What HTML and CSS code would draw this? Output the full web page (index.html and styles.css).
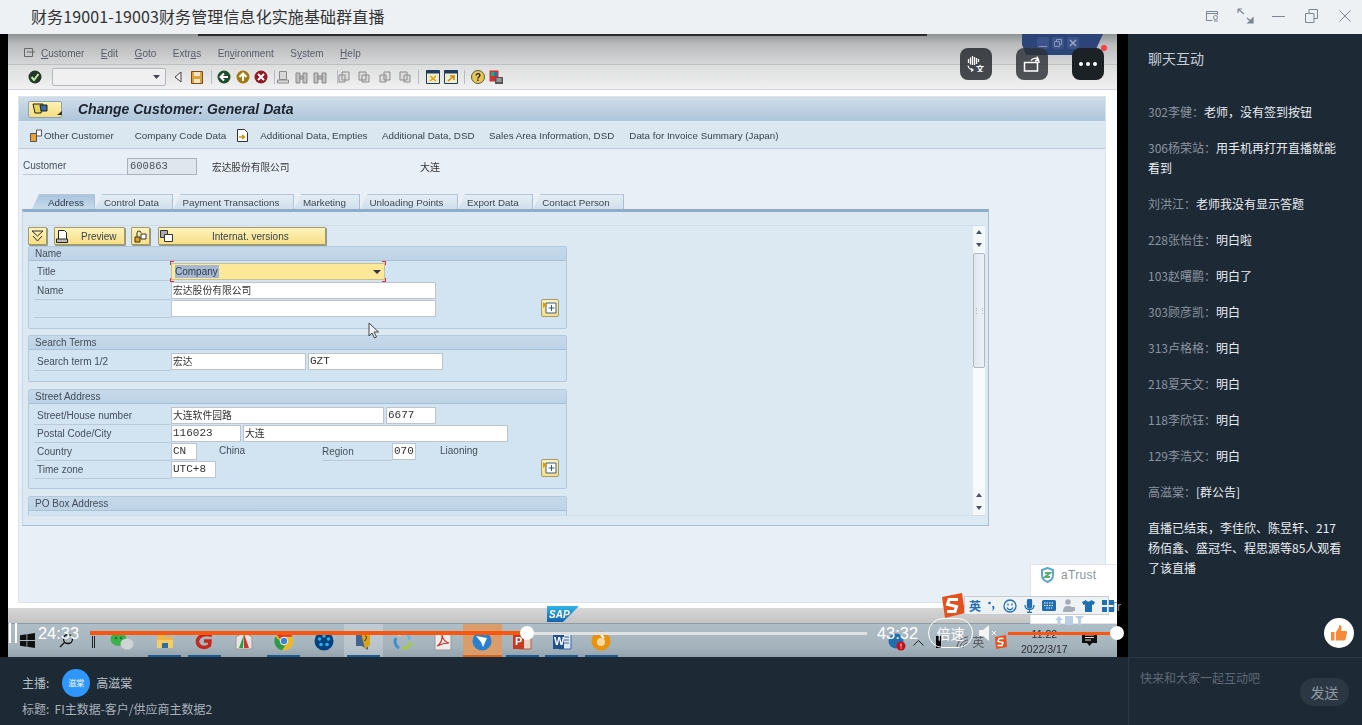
FILE: index.html
```html
<!DOCTYPE html>
<html lang="zh">
<head>
<meta charset="utf-8">
<title>财务19001-19003财务管理信息化实施基础群直播</title>
<link rel="stylesheet" href="styles.css">
</head>
<body>
<div class="app">
  <header class="titlebar">
    <h1 class="title">财务19001-19003财务管理信息化实施基础群直播</h1>
    <div class="winctl">
      <svg class="ic-a" width="14" height="12" viewBox="0 0 14 12" fill="none" stroke="#7d8791"><path d="M12.5 5V1.5H1.5v9h6M1.5 3.5h11"/><circle cx="10.5" cy="7.5" r="2"/><path d="M9 11h4"/></svg>
      <svg class="ic-b" width="17" height="16" viewBox="0 0 17 16" fill="none" stroke="#7d8791" stroke-width="1.2"><path d="M1 1l6 5M1 1v4M1 1h4M16 15l-6-5"/><path d="M16 15v-5l-5 5z" fill="#7d8791"/></svg>
      <svg class="ic-c" width="13" height="12" viewBox="0 0 13 12" stroke="#7d8791"><path d="M0 6.5h13"/></svg>
      <svg class="ic-d" width="13" height="14" viewBox="0 0 13 14" fill="none" stroke="#7d8791"><path d="M.5 4.5h8.500v9H.5zM4 4.500V.5h8.500v9H9"/></svg>
      <svg class="ic-e" width="12" height="12" viewBox="0 0 12 12" stroke="#7d8791"><path d="M.5.5l11 11M11.500.5l-11 11"/></svg>
    </div>
  </header>

  <main class="main">
    <section class="video">
      <div class="sap">
        <div class="sap-menu">
          <svg width="12" height="10" viewBox="0 0 12 10" fill="none" stroke="#666"><path d="M.5.5h8v8h-8zM3 4h8"/></svg>
          <nav class="menu-items"><span><u>C</u>ustomer</span><span><u>E</u>dit</span><span><u>G</u>oto</span><span>Extr<u>a</u>s</span><span>En<u>v</u>ironment</span><span>S<u>y</u>stem</span><span><u>H</u>elp</span></nav>
        </div>
        <div class="sap-tools">
          <svg class="t-check" width="14" height="14" viewBox="0 0 14 14"><circle cx="7" cy="7" r="6.500" fill="#24382a"/><path d="M3.500 7l2.500 3 4.500-6" fill="none" stroke="#c6eea8" stroke-width="2"/></svg>
          <div class="combo"><svg width="7" height="4" viewBox="0 0 7 4"><path d="M0 0h7L3.500 4z" fill="#445"/></svg></div>
          <svg class="t-back" width="8" height="12" viewBox="0 0 8 12"><path d="M7 1L1 6l6 5z" fill="#eee" stroke="#444"/></svg>
          <svg class="t-save" width="12" height="13" viewBox="0 0 12 13"><path d="M.5.5h11v12H.5z" fill="#d9a441" stroke="#7a4a1c"/><path d="M3 1h6v4H3zM3 8h6v4H3z" fill="#f2e4c4"/></svg>
          <i class="tsep s1"></i>
          <svg class="t-nav1" width="14" height="14" viewBox="0 0 14 14"><circle cx="7" cy="7" r="6.500" fill="#1f4d2c"/><path d="M11 7H5M7 3.500L3.500 7 7 10.500" fill="none" stroke="#fff" stroke-width="2"/></svg>
          <svg class="t-nav2" width="14" height="14" viewBox="0 0 14 14"><circle cx="7" cy="7" r="6.500" fill="#a67810"/><path d="M7 11V5M3.500 7L7 3.500 10.500 7" fill="none" stroke="#fff" stroke-width="2"/></svg>
          <svg class="t-nav3" width="14" height="14" viewBox="0 0 14 14"><circle cx="7" cy="7" r="6.500" fill="#8e1a24"/><path d="M4 4l6 6M10 4l-6 6" stroke="#fff" stroke-width="2"/></svg>
          <i class="tsep s2"></i>
          <svg class="t-g1" width="12" height="13" viewBox="0 0 12 13" fill="#d7d7d7" stroke="#8b8b8b"><path d="M2.500.5h7v8h-7zM.5 9h11v3H.5z"/></svg>
          <svg class="t-g2" width="13" height="13" viewBox="0 0 13 13" fill="#c0c0c0" stroke="#8b8b8b"><path d="M1 2h4v10H1zM8 2h4v10H8zM5 5h3v3H5z"/></svg>
          <svg class="t-g3" width="14" height="13" viewBox="0 0 14 13" fill="#c0c0c0" stroke="#8b8b8b"><path d="M1 2h4v10H1zM9 2h4v10H9zM5 5h4v3H5z"/></svg>
          <i class="tsep s3"></i>
          <svg class="t-g4" width="12" height="12" viewBox="0 0 12 12" fill="#ddd" stroke="#8b8b8b"><path d="M4 1h7v8H4zM1 4h6v7H1z"/></svg>
          <svg class="t-g5" width="12" height="12" viewBox="0 0 12 12" fill="#ddd" stroke="#8b8b8b"><path d="M1 1h7v8H1zM4 4h7v7H4z"/></svg>
          <svg class="t-g5" width="12" height="12" viewBox="0 0 12 12" fill="#ddd" stroke="#8b8b8b"><path d="M5 1h6v8H5zM1 4h6v7H1z"/></svg>
          <svg class="t-g5" width="12" height="12" viewBox="0 0 12 12" fill="#ddd" stroke="#8b8b8b"><path d="M1 1h7v8H1zM5 4h6v7H5z"/></svg>
          <i class="tsep s4"></i>
          <svg class="t-w1" width="14" height="14" viewBox="0 0 14 14"><path d="M.5.5h13v13H.5z" fill="#f2edc8" stroke="#1e3c5c"/><path d="M.5.5h13v3H.5z" fill="#1e3c5c"/><path d="M4 6l6 5M10 6l-6 5" stroke="#d5a21a" stroke-width="1.500"/></svg>
          <svg class="t-w2" width="14" height="14" viewBox="0 0 14 14"><path d="M.5.5h13v13H.5z" fill="#f2edc8" stroke="#1e3c5c"/><path d="M.5.5h13v3H.5z" fill="#1e3c5c"/><path d="M4 11l6-5M6 6h4v4" fill="none" stroke="#c8880c" stroke-width="1.500"/></svg>
          <i class="tsep s5"></i>
          <svg class="t-help" width="14" height="14" viewBox="0 0 14 14"><circle cx="7" cy="7" r="6.500" fill="#e7c652" stroke="#5c5c3c"/><text x="4" y="11" class="svg-q">?</text></svg>
          <svg class="t-cust" width="14" height="14" viewBox="0 0 14 14"><path d="M.5.5h9v11H.5z" fill="#c33"/><path d="M2 2h3v4H2z" fill="#2a7"/><path d="M5 2h3v4H5z" fill="#27b"/><path d="M6 7h8v7H6z" fill="#555"/><path d="M7.500 9h5M7.500 11h5" stroke="#ddd"/></svg>
        </div>
        <div class="sap-stage">
          <div class="panel">
            <div class="panel-title">
              <div class="sysbtn"><svg width="16" height="12" viewBox="0 0 16 12"><path d="M1 1h10l-2 9H3z" fill="#e8d35a" stroke="#222"/><path d="M8 2h7v6H9z" fill="#3a6ea5" stroke="#222"/></svg><svg class="sysarrow" width="5" height="4" viewBox="0 0 5 4"><path d="M5 0v4H0z" fill="#333"/></svg></div>
              <h2 class="screen-name">Change Customer: General Data</h2>
            </div>
            <div class="appbar">
              <svg width="13" height="13" viewBox="0 0 13 13"><path d="M.5 4.500h6v8h-6z" fill="#e8a33a" stroke="#555"/><path d="M6.500 1h5v6h-5z" fill="#fff" stroke="#555"/></svg>
              <span class="a-other">Other Customer</span>
              <span class="a-company">Company Code Data</span>
              <svg class="a-doc" width="11" height="13" viewBox="0 0 11 13"><path d="M.5.5h7l3 3v9H.5z" fill="#fff" stroke="#333"/><path d="M2 8h5M5 6l2.500 2L5 10" fill="none" stroke="#c79a10" stroke-width="1.500"/></svg>
              <span class="a-next">Additional Data, Empties</span>
              <span class="a-gap">Additional Data, DSD</span>
              <span class="a-gap">Sales Area Information, DSD</span>
              <span class="a-gap a-last">Data for Invoice Summary (Japan)</span>
            </div>
            <div class="custrow">
              <span class="lbl cust-lbl">Customer</span>
              <span class="ro-field mono">600863</span>
              <span class="cust-name">宏达股份有限公司</span>
              <span class="cust-city">大连</span>
            </div>
            <div class="tabs">
              <span class="tab active">Address</span>
              <span class="tab">Control Data</span>
              <span class="tab">Payment Transactions</span>
              <span class="tab">Marketing</span>
              <span class="tab">Unloading Points</span>
              <span class="tab">Export Data</span>
              <span class="tab">Contact Person</span>
            </div>
            <div class="tabbox">
              <div class="tabinner">
                <div class="form">
                  <div class="btnrow">
                    <div class="ybtn b-sq"><svg width="13" height="12" viewBox="0 0 13 12" fill="none" stroke="#333"><path d="M1 1h11L6.500 6zM2 6l4.500 5L11 6"/></svg></div>
                    <div class="ybtn b-prev"><svg width="12" height="13" viewBox="0 0 12 13"><path d="M2.500.5h6l2 2v7h-8z" fill="#fff" stroke="#222"/><path d="M.5 9h11v3.500H.5z" fill="#bbb" stroke="#222"/></svg><span>Preview</span></div>
                    <div class="ybtn b-sq2"><svg width="13" height="13" viewBox="0 0 13 13"><path d="M1 7h5v5H1z" fill="#e8a020" stroke="#333"/><path d="M7 4h5v5H7z" fill="#fff" stroke="#333"/><path d="M3 7V3a2 2 0 0 1 4 0" fill="none" stroke="#333"/></svg></div>
                    <div class="ybtn b-int"><svg width="13" height="12" viewBox="0 0 13 12"><path d="M.5.5h7v7h-7z" fill="#aaa" stroke="#333"/><path d="M4.500 4.500h8v7h-8z" fill="#fff" stroke="#333"/></svg><span>Internat. versions</span></div>
                  </div>

                  <div class="group g-name">
                    <div class="ghead">Name</div>
                    <div class="gbody">
                      <div class="row row-title"><span class="lbl">Title</span>
                        <div class="select"><span class="sel-text">Company</span><svg width="8" height="4" viewBox="0 0 8 4"><path d="M0 0h8L4 4z" fill="#334"/></svg>
                          <i class="req tl"></i><i class="req tr"></i><i class="req bl"></i><i class="req br"></i></div></div>
                      <div class="row"><span class="lbl">Name</span><span class="inp w265">宏达股份有限公司</span></div>
                      <div class="row row-last"><span class="lbl"></span><span class="inp w265"></span>
                        <div class="morebtn m1"><svg width="14" height="12" viewBox="0 0 14 12"><path d="M3 1h10v10H3z" fill="#fff" stroke="#3a5a80"/><path d="M5.500 6h6M8.500 3v6" stroke="#2a5a90"/><path d="M0 0l4 3-4 3z" fill="#d89a10"/></svg></div></div>
                    </div>
                  </div>

                  <div class="group g-search">
                    <div class="ghead">Search Terms</div>
                    <div class="gbody">
                      <div class="row"><span class="lbl">Search term 1/2</span><span class="inp w135">宏达</span><span class="inp w135 ml2 mono">GZT</span></div>
                    </div>
                  </div>

                  <div class="group g-street">
                    <div class="ghead">Street Address</div>
                    <div class="gbody">
                      <div class="row"><span class="lbl">Street/House number</span><span class="inp w213">大连软件园路</span><span class="inp w50 ml2 mono">6677</span></div>
                      <div class="row"><span class="lbl">Postal Code/City</span><span class="inp w70 mono">116023</span><span class="inp w265 ml2">大连</span></div>
                      <div class="row"><span class="lbl">Country</span><span class="inp w26 mono">CN</span><span class="plain p-china">China</span><span class="lbl lbl-region">Region</span><span class="inp w24 mono">070</span><span class="plain p-liao">Liaoning</span></div>
                      <div class="row row-last"><span class="lbl">Time zone</span><span class="inp w45 mono">UTC+8</span>
                        <div class="morebtn m2"><svg width="14" height="12" viewBox="0 0 14 12"><path d="M3 1h10v10H3z" fill="#fff" stroke="#3a5a80"/><path d="M5.500 6h6M8.500 3v6" stroke="#2a5a90"/><path d="M0 0l4 3-4 3z" fill="#d89a10"/></svg></div></div>
                    </div>
                  </div>

                  <div class="group g-po">
                    <div class="ghead">PO Box Address</div>
                  </div>
                </div>
                <div class="vscroll">
                  <i class="arr up"></i><i class="arr down"></i>
                  <div class="thumb"><b>⋮⋮</b></div>
                  <div class="track"></div>
                  <i class="arr up"></i><i class="arr down"></i>
                </div>
              </div>
            </div>
          </div>
        </div>
        <div class="statusbar">
          <svg class="sap-logo" width="32" height="16" viewBox="0 0 32 16"><defs><linearGradient id="sapg" x1="0" y1="0" x2="0" y2="1"><stop offset="0" stop-color="#2fb4e8"/><stop offset="1" stop-color="#1563ad"/></linearGradient></defs><path d="M0 0h32L16 16H0z" fill="url(#sapg)"/><text x="2" y="12" class="svg-sap">SAP</text></svg>
        </div>
        <div class="taskbar">
          <div class="tb-item tb-start"><svg width="15" height="15" viewBox="0 0 15 15" fill="#111"><path d="M0 2.200L6.500 1.300v5.700H0zM7.300 1.200L15 0v7H7.300zM0 8h6.500v5.700L0 12.800zM7.300 8H15v7l-7.700-1.200z"/></svg></div>
          <div class="tb-item tb-search"><svg width="15" height="15" viewBox="0 0 15 15" fill="none" stroke="#111" stroke-width="1.300"><circle cx="9" cy="6" r="4.500"/><path d="M5.500 9.500L1 14"/></svg></div>
          <i class="tb-div"></i>
          <div class="tb-item tb-first"><svg class="wx" width="24" height="18" viewBox="0 0 24 18"><ellipse cx="8.500" cy="7" rx="8" ry="7" fill="#3db04a"/><ellipse cx="17" cy="12" rx="6.500" ry="5.500" fill="#cfd4d6"/><circle cx="6" cy="6" r="1.200" fill="#174"/><circle cx="11" cy="6" r="1.200" fill="#174"/></svg></div>
          <div class="tb-item on"><svg width="18" height="16" viewBox="0 0 18 16"><path d="M1 2h6l2 2h8v11H1z" fill="#eeb545"/><path d="M1 7h16v8H1z" fill="#f5cd66"/><path d="M6 10h6v5H6z" fill="#2d6ea8"/></svg></div>
          <div class="tb-item on"><svg width="20" height="18" viewBox="0 0 20 18" fill="none" stroke="#c6281c" stroke-width="3.500"><path d="M17 3.500C9 .5 2 5 2.500 10c.5 5.500 8 7 12 3.500L15 9H9"/></svg></div>
          <div class="tb-item"><svg width="20" height="20" viewBox="0 0 20 20"><path d="M2 18V6L10 1l8 5v12z" fill="#e4e4e4" stroke="#999"/><path d="M10 3L5 17h4z" fill="#2d9d46"/><path d="M10 3l5 14h-5z" fill="#d0342c"/></svg></div>
          <div class="tb-item on"><svg width="20" height="20" viewBox="0 0 20 20"><circle cx="10" cy="10" r="9.500" fill="#e9b92c"/><path d="M10 .5a9.500 9.500 0 0 1 8.500 5.200H10A4.500 4.500 0 0 0 6 8L2.800 3.800A9.500 9.500 0 0 1 10 .5z" fill="#cf3b2e"/><path d="M1.500 5.500A9.500 9.500 0 0 0 8 19.300l3.500-5A4.500 4.500 0 0 1 6 10z" fill="#2c9a48"/><circle cx="10" cy="10" r="3.800" fill="#3f7fd8" stroke="#eee"/></svg></div>
          <div class="tb-item"><svg width="20" height="20" viewBox="0 0 20 20"><circle cx="10" cy="10" r="9.500" fill="#063f7f"/><g fill="#22b5e6"><circle cx="10" cy="5" r="1.800"/><circle cx="14.500" cy="8" r="1.800"/><circle cx="13" cy="13.500" r="1.800"/><circle cx="7" cy="13.500" r="1.800"/><circle cx="5.500" cy="8" r="1.800"/></g></svg></div>
          <div class="tb-item tb-hi on"><svg width="20" height="20" viewBox="0 0 20 20"><path d="M3 3h12v16l-6-4H3z" fill="#42638f"/><path d="M8 2h9v12l-5 4z" fill="#d8a516"/><path d="M12 5c2 0 2 3 0 4v1" fill="none" stroke="#222"/></svg></div>
          <div class="tb-item"><svg width="20" height="20" viewBox="0 0 20 20" fill="none" stroke-width="3"><path d="M10 2c5 0 7 3 6 7" stroke="#6ab7d8"/><path d="M18 11c-1 5-5 7-9 6" stroke="#a6c74e"/><path d="M6 17c-4-2-5-7-3-10" stroke="#3f8fc7"/><path d="M5 4c2-2 3-2 5-2" stroke="#e9e9e9"/></svg></div>
          <div class="tb-item"><svg width="18" height="20" viewBox="0 0 18 20"><path d="M1 1h16v18H1z" fill="#ececec" stroke="#999"/><path d="M3 15c3-1 6-7 5-11 1 5 3 7 7 8-4 0-8 1-12 3z" fill="none" stroke="#c4322a" stroke-width="1.200"/></svg></div>
          <div class="tb-item tb-orange"><svg width="20" height="20" viewBox="0 0 20 20"><circle cx="10" cy="10" r="9.500" fill="#2a7fcf"/><path d="M4 5l11 2-4 9-2-5z" fill="#fff"/></svg></div>
          <div class="tb-item on"><svg width="20" height="20" viewBox="0 0 20 20"><path d="M7 3h12v15H7z" fill="#eed2c9" stroke="#b85a44"/><path d="M1 2h11v16H1z" fill="#c43a1e"/><text x="3" y="14" class="svg-letter">P</text></svg></div>
          <div class="tb-item on"><svg width="20" height="20" viewBox="0 0 20 20"><path d="M7 3h12v15H7z" fill="#dce6f4" stroke="#3d66a8"/><path d="M9 6h8M9 9h8M9 12h8" stroke="#3d66a8"/><path d="M1 2h11v16H1z" fill="#23508f"/><text x="2" y="14" class="svg-letter">W</text></svg></div>
          <div class="tb-item on"><svg width="20" height="20" viewBox="0 0 20 20"><circle cx="10" cy="10" r="9.500" fill="#e8920e"/><circle cx="10" cy="11" r="4" fill="#f6dca4"/><path d="M10 4l3 3" stroke="#fff" stroke-width="2"/></svg></div>
          <div class="tray">
            <svg class="tr-help" width="18" height="18" viewBox="0 0 18 18"><circle cx="8" cy="8" r="7.500" fill="#1f6fae"/><circle cx="13" cy="13" r="4.500" fill="#c8101c"/><path d="M13 10.500v3M13 14.500v1" stroke="#fff"/></svg>
            <svg class="tr-up" width="11" height="7" viewBox="0 0 11 7" fill="none" stroke="#222"><path d="M.5 6.500l5-5 5 5"/></svg>
            <i class="tr-black"></i>
            <svg class="tr-wifi" width="13" height="13" viewBox="0 0 13 13" fill="none" stroke="#555"><path d="M1 12c0-6 5-11 11-11M4 12c0-4 4-8 8-8M7 12c0-3 2-5 5-5"/></svg>
            <span class="tr-lang">英</span>
            <svg class="tr-sogou" width="13" height="14" viewBox="0 0 13 14"><path d="M1 2l11-2 1 12-11 2z" fill="#e4501e"/><path d="M9.500 3.500H5L4 6.500l5 1-1 3H3.500" fill="none" stroke="#fff" stroke-width="1.500"/></svg>
            <div class="tr-clock"><span>11:22</span><span>2022/3/17</span></div>
            <svg class="tr-note" width="15" height="15" viewBox="0 0 15 15"><path d="M0 0h15v11h-5l-2.500 3L5 11H0z" fill="#111"/><path d="M3 3h9M3 5.500h9M3 8h6" stroke="#ddd"/></svg>
          </div>
        </div>
      </div>

      <div class="hole-shadow"></div>
      <div class="sap-win">
        <i><svg width="12" height="12" viewBox="0 0 12 12" stroke="#8696b8"><path d="M2 9.500h8"/></svg></i>
        <i><svg width="12" height="12" viewBox="0 0 12 12" fill="none" stroke="#8696b8"><path d="M2.500 4.500h5v5h-5zM4.500 4.500v-2h5v5h-2"/></svg></i>
        <i><svg width="12" height="12" viewBox="0 0 12 12" stroke="#9aa8c4" stroke-width="1.500"><path d="M3 3l6 6M9 3l-6 6"/></svg></i>
      </div>
      <div class="fab fab-a"><svg width="18" height="16" viewBox="0 0 18 16" fill="none" stroke="#fff"><path d="M1.500 3v4M3.500 1.500v7M5.500 0v9M7.500 1v8M9.500 2v6M11.500 3v3" stroke-width="1.300"/><path d="M1 9.500c.5 2.500 2 4 4.500 4.500M4 15.500L6 14l-2-1.500" stroke-width="1.200"/><text x="9" y="15.500" class="svg-wen">文</text></svg></div>
      <div class="fab fab-b"><svg width="18" height="16" viewBox="0 0 18 16" fill="none" stroke="#fff" stroke-width="1.500"><path d="M1.500 6.500h13v8.500h-13z"/><path d="M8 4.500c2-2.500 5-3 7.500-.5l.5 3M14 .5l1.500 3.500-3.500 1"/></svg></div>
      <div class="fab fab-c"><i></i><i></i><i></i><b class="dot"></b></div>

      <svg class="cursor" width="12" height="17" viewBox="0 0 12 17"><path d="M1 1v13l3-3 2.500 5 2-1L6 10h4.500z" fill="#eef2f6" stroke="#444"/></svg>

      <div class="atrust">
        <div class="atrust-head"><svg width="15" height="16" viewBox="0 0 15 16" fill="none" stroke-width="2"><path d="M2 3l5.500-2L13 3v5c0 4-3 6-5.500 7C5 14 2 12 2 8z" stroke="#5da8c9"/><path d="M5 6h5L5 10h5" stroke="#5cae6e"/></svg><span>aTrust</span></div>
        <span class="atrust-tr">Tr</span>
        <svg class="atrust-arrows" width="30" height="9" viewBox="0 0 30 9" fill="#b9cfe6"><path d="M0 4l4-4 4 4H5.500v5h-3V4zM10 0h8v9h-8zM20 0h9l-3 3v6h-3V3z"/></svg>
      </div>
      <div class="ime">
        <svg class="ime-logo" width="24" height="25" viewBox="0 0 24 25"><path d="M1 4L21 0l3 20-20 5z" fill="#e4501e"/><path d="M17 6.500H8l-1.500 5 9 2-1.500 5H6" fill="none" stroke="#fff" stroke-width="3"/></svg>
        <div class="ime-bar">
          <span class="ime-en">英</span>
          <svg width="8" height="10" viewBox="0 0 8 10" fill="#1f6fb5"><circle cx="1.500" cy="2" r="1.300"/><path d="M6 5c1 2 0 4-2 5 1-2 1-3 0-5z"/></svg>
          <svg width="14" height="14" viewBox="0 0 14 14" fill="none" stroke="#1f6fb5" stroke-width="1.300"><circle cx="7" cy="7" r="6"/><path d="M5 4.500v2M9 4.500v2M4 8.500c1.500 3 4.500 3 6 0"/></svg>
          <svg width="11" height="14" viewBox="0 0 11 14" fill="none" stroke="#1f6fb5" stroke-width="1.300"><rect x="3.500" y="0" width="4" height="9" rx="2" fill="#1f6fb5"/><path d="M1 6c0 6 9 6 9 0M5.500 11v3M3 13.500h5"/></svg>
          <svg width="14" height="11" viewBox="0 0 14 11"><rect width="14" height="11" rx="1.500" fill="#1f6fb5"/><path d="M2 3h10M2 5.500h10M4 8h6" stroke="#fff" stroke-dasharray="1.500 1"/></svg>
          <svg width="12" height="13" viewBox="0 0 12 13" fill="#a3adb8"><circle cx="5" cy="3" r="2.800"/><path d="M0 13c0-5 2-6 5-6 3 0 5 1 5 6z"/><rect x="6" y="8" width="6" height="4"/></svg>
          <svg width="13" height="12" viewBox="0 0 13 12" fill="#1f6fb5"><path d="M4 0L0 2l1.500 3L3 4.500V12h7V4.500l1.500.5L13 2 9 0C8 2 5 2 4 0z"/></svg>
          <svg width="12" height="12" viewBox="0 0 12 12" fill="#1f6fb5"><path d="M0 0h5v5H0zM7 0h5v5H7zM0 7h5v5H0zM7 7h5v5H7z"/></svg>
        </div>
      </div>

      <div class="controls">
        <div class="pause"><i></i><i></i></div>
        <span class="time t-cur">24:33</span>
        <div class="progress"><div class="progress-fill"></div><i class="knob"></i></div>
        <span class="time t-end">43:32</span>
        <span class="speed">倍速</span>
        <svg class="mute" width="18" height="16" viewBox="0 0 18 16"><path d="M0 5h4l6-5v16l-6-5H0z" fill="#f4f4f4"/><path d="M13 6l4 4M17 6l-4 4" stroke="#f4f4f4"/></svg>
        <div class="volume"><i class="knob"></i></div>
      </div>
    </section>

    <aside class="chat">
      <h2 class="chat-title">聊天互动</h2>
      <ul class="msgs">
        <li><em>302李健：</em>老师，没有签到按钮</li>
        <li><em>306杨荣站：</em>用手机再打开直播就能看到</li>
        <li><em>刘洪江：</em>老师我没有显示答题</li>
        <li><em>228张怡佳：</em>明白啦</li>
        <li><em>103赵曙鹏：</em>明白了</li>
        <li><em>303顾彦凯：</em>明白</li>
        <li><em>313卢格格：</em>明白</li>
        <li><em>218夏天文：</em>明白</li>
        <li><em>118李欣钰：</em>明白</li>
        <li><em>129李浩文：</em>明白</li>
        <li><em>高滋棠：</em>[群公告]</li>
        <li>直播已结束，李佳欣、陈昱轩、217杨佰鑫、盛冠华、程思源等85人观看了该直播</li>
      </ul>
      <div class="like"><svg width="16" height="16" viewBox="0 0 16 16" fill="#f58a3c"><path d="M0 7h3.500v8.500H0zM5 7l3-4.500V0c2 0 3 1.500 2.500 3.500L10 6h5c1 0 1.300 1 1 2l-1.500 6.500c-.2.700-.7 1-1.500 1H5z"/></svg></div>
    </aside>
  </main>

  <footer class="bottom">
    <div class="info">
      <div class="info-host"><span>主播:</span><span class="avatar">滋棠</span><span>高滋棠</span></div>
      <div class="info-title">标题: FI主数据-客户/供应商主数据2</div>
    </div>
    <div class="composer">
      <span class="placeholder">快来和大家一起互动吧</span>
      <span class="send">发送</span>
    </div>
  </footer>
</div>
</body>
</html>
```
FILE: styles.css
```css
* { box-sizing: border-box; }
html, body { margin: 0; padding: 0; }
body {
  width: 1362px; height: 725px; overflow: hidden;
  font-family: "Liberation Sans", "Noto Sans CJK SC", sans-serif;
  background: #1d2935;
}
h1, h2, ul { margin: 0; padding: 0; font-weight: normal; }
em { font-style: normal; }
svg { display: block; flex: none; }
.app { display: flex; flex-direction: column; height: 725px; }

/* title bar */
.titlebar {
  height: 34px; flex: none; background: #edf1f4;
  display: flex; align-items: center; justify-content: space-between;
  padding: 0 11px 2px 31px;
}
.title { font: 16px/24px "Noto Sans CJK SC", sans-serif; color: #333; letter-spacing: .12px; }
.winctl { display: flex; align-items: center; }
.ic-b { margin-left: 18px; }
.ic-c { margin-left: 18px; }
.ic-d { margin-left: 20px; }
.ic-e { margin-left: 21px; }

/* main */
.main { display: flex; height: 623px; flex: none; }
.video { width: 1128px; flex: none; background: #000; padding: 0 11px 0 8px; position: relative; overflow: hidden; }
.sap { height: 623px; display: flex; flex-direction: column; filter: blur(.35px); color: #333; font-size: 10px; }

.sap-menu {
  height: 31px; flex: none; padding: 7px 0 0 16px; display: flex; align-items: center; color: #58606a;
  background: linear-gradient(#8f9293 0, #b9bbbc 10px, #d5d6d7 100%);
  border-bottom: 1px solid #bdbfc2;
}
.menu-items { display: flex; gap: 16.500px; margin-left: 5px; font-size: 10px; padding-top: 2px; }
.menu-items u { text-decoration-thickness: 1px; }

.sap-tools {
  height: 25px; flex: none; display: flex; align-items: center; padding-left: 20px;
  background: linear-gradient(#dcdddd, #f1f1f2); border-bottom: 1px solid #d4d8de;
}
.combo {
  width: 114px; height: 18px; margin-left: 10px; background: #f0f0f0; border: 1px solid #b4b8bc; border-radius: 2px;
  display: flex; align-items: center; justify-content: flex-end; padding-right: 5px;
}
.t-back { margin-left: 8px; }
.t-save { margin-left: 9px; }
.tsep { width: 1px; height: 14px; background: #b8bcc2; flex: none; }
.s1 { margin-left: 8px; }
.t-nav1 { margin-left: 5px; }
.t-nav2 { margin-left: 5px; }
.t-nav3 { margin-left: 4px; }
.s2 { margin-left: 6px; }
.t-g1 { margin-left: 2px; }
.t-g2 { margin-left: 5.500px; }
.t-g3 { margin-left: 5.500px; }
.s3 { margin-left: 10px; }
.t-g4 { margin-left: 0; }
.t-g5 { margin-left: 8.400px; }
.s4 { margin-left: 7px; }
.t-w1 { margin-left: 7px; }
.t-w2 { margin-left: 4px; }
.s5 { margin-left: 6px; }
.t-help { margin-left: 6px; }
.t-cust { margin-left: 4px; }
.svg-q { font: bold 10px "Liberation Sans", sans-serif; fill: #223; }
.sap-stage { height: 518px; flex: none; background: #fff; padding: 6px 11px 5px 10px; }
.panel { height: 507px; background: #e8eff7; border: 1px solid #dbe3ec; display: flex; flex-direction: column; }

.panel-title {
  height: 25px; flex: none; display: flex; align-items: center; padding-left: 9px;
  background: linear-gradient(#d0dde9, #aec5da); border-bottom: 1px solid #e4edf5;
}
.sysbtn {
  width: 34px; height: 17px; display: flex; align-items: center; padding-left: 3px; position: relative;
  background: linear-gradient(#fdf1b5, #f6dd7e); border: 1px solid #8ba3ba; border-radius: 2px;
}
.sysarrow { margin: 7px 0 0 9px; }
.screen-name { margin-left: 16px; font: italic bold 14px/18px "Liberation Sans", sans-serif; color: #1b2530; }

.appbar {
  height: 27px; flex: none; display: flex; align-items: center; padding: 1px 0 0 11px; color: #39434d;
  background: #dae6f0; border-bottom: 1px solid #b8cadb; font-size: 9.800px;
}
.a-other { margin-left: 1px; }
.a-company { margin-left: 21px; }
.a-doc { margin-left: 11px; }
.a-next { margin-left: 12px; }
.a-gap { margin-left: 14.500px; }
.a-last { margin-left: 15px; }

.custrow { height: 17px; margin-top: 9px; flex: none; display: flex; align-items: center; padding-left: 4px; }
.lbl { color: #44505c; border-bottom: 1px solid #bccad8; height: 17px; line-height: 16px; flex: none; width: 137px; padding-left: 3px; display: block; }
.cust-lbl { width: 104px; padding-left: 0; }
.ro-field { width: 70px; height: 17px; line-height: 15px; padding-left: 2px; border: 1px solid #aab2ba; background: #dfe6ee; color: #4a525a; }
.ro-field.mono { font-size: 10.500px; }
.mono { font-family: "Liberation Mono", monospace; font-size: 11px; }
.cust-name { margin-left: 15px; width: 208px; font: 9.700px/16px "Noto Sans CJK SC", sans-serif; color: #333; }
.cust-city { font: 10px/16px "Noto Sans CJK SC", sans-serif; color: #333; }

.tabs { display: flex; height: 15px; margin-top: 19px; padding-left: 13px; flex: none; font-size: 9.800px; }
.tab {
  padding: 0 13.500px 0 9px; height: 15px; line-height: 15px; color: #3d4852;
  background: linear-gradient(#e4edf5, #d0dfec); border-right: 1px solid #a9bfd4; border-top: 1px solid #b5c8da;
  clip-path: polygon(7px 0, 100% 0, 100% 100%, 0 100%);
}
.tab.active { padding: 0 10px 0 16px; background: linear-gradient(#a9c4dd, #c8dbeb); color: #2b3a48; }

.tabbox {
  width: 967px; height: 317px; margin-left: 3px; flex: none;
  border-top: 3px solid #8facca; border-right: 1px solid #a6bfd6; border-bottom: 1px solid #a6bfd6; border-left: 1px solid #c7d7e5;
  background: #dce8f2; padding: 13px 3px 9px 5px;
}
.tabinner { height: 291px; display: flex; background: #dce9f3; border-top: 1px solid #d0dde8; border-bottom: 1px solid #d0dde8; }
.form { width: 944px; padding-top: 1px; overflow: hidden; }

.btnrow { display: flex; height: 19px; }
.ybtn {
  height: 18px; display: flex; align-items: center; flex: none;
  background: linear-gradient(#fdf2bb, #f7df85); border: 1px solid #a29a68; border-radius: 1px;
  box-shadow: 1px 1px 0 #8f9a8c; color: #394450;
}
.b-sq { width: 19px; justify-content: center; }
.b-prev { width: 71px; margin-left: 7px; padding-left: 1px; }
.b-prev span { margin-left: 13px; }
.b-sq2 { width: 19px; margin-left: 6px; justify-content: center; }
.b-int { width: 168px; margin-left: 8px; padding-left: 1px; }
.b-int span { margin-left: 39px; }

.group { width: 539px; background: #d2e3f1; border: 1px solid #b3c9dc; border-radius: 2px; overflow: hidden; }
.ghead { height: 14px; line-height: 13px; padding-left: 6px; color: #424e59; background: linear-gradient(#c6d9ea, #bed3e6); border-bottom: 1px solid #a8c0d6; }
.gbody { padding: 2px 0 0 5px; }
.g-name { height: 83px; }
.g-search { height: 47px; margin-top: 6px; }
.g-search .gbody { padding-top: 3px; }
.g-street { height: 100px; margin-top: 7px; }
.g-street .gbody { padding-top: 3px; }
.g-po { height: 30px; margin-top: 7px; }

.row { height: 18px; display: flex; align-items: flex-start; position: relative; }
.row-title { height: 19px; }
.row .lbl { padding-top: 1px; height: 18px; }
.row > .lbl:first-child { width: 137px; margin-right: 0; }
.inp {
  height: 17px; line-height: 15px; background: #fff; border: 1px solid #bcc4cd; padding-left: 1px; color: #333; flex: none;
  font-family: "Liberation Sans", "Noto Sans CJK SC", sans-serif; font-size: 9.800px; overflow: hidden;
}
.inp.mono { font-family: "Liberation Mono", monospace; font-size: 11px; }
.w265 { width: 265px; }
.w135 { width: 135px; }
.w213 { width: 213px; }
.w50 { width: 50px; }
.w70 { width: 70px; }
.w26 { width: 26px; }
.w24 { width: 24px; }
.w45 { width: 45px; }
.ml2 { margin-left: 2px; }
.select {
  width: 214px; height: 17px; background: #fbe898; border: 1px solid #c9c090; position: relative;
  display: flex; align-items: center; justify-content: space-between; padding: 0 3px 0 3px;
}
.sel-text { background: #a8b8d0; color: #30404c; line-height: 13px; padding-right: 1px; }
.req { position: absolute; width: 4px; height: 4px; border: 0 solid #d8323c; }
.req.tl { left: -2px; top: -3px; border-width: 1px 0 0 1px; }
.req.tr { right: -2px; top: -3px; border-width: 1px 1px 0 0; }
.req.bl { left: -2px; bottom: -3px; border-width: 0 0 1px 1px; }
.req.br { right: -2px; bottom: -3px; border-width: 0 1px 1px 0; }
.plain { color: #44505c; flex: none; line-height: 16px; }
.p-china { margin-left: 22px; width: 103px; }
.lbl-region.lbl { width: 70px; padding-left: 0; }
.p-liao { margin-left: 24px; }
.morebtn {
  width: 18px; height: 18px; margin-left: 105px; margin-top: -1px; flex: none;
  background: linear-gradient(#fdf2bb, #f7df85); border: 1px solid #a29a68; border-radius: 2px;
  display: flex; align-items: center; justify-content: center;
}
.morebtn.m2 { margin-left: 325px; margin-top: -2px; }

.vscroll { width: 12px; margin-left: 1px; display: flex; flex-direction: column; background: #f8fafc; }
.arr { height: 13px; flex: none; display: block; position: relative; background: #f4f7fa; }
.arr::after { content: ""; position: absolute; left: 3px; top: 4px; border: 3.500px solid transparent; }
.arr.up::after { border-bottom: 4px solid #46525e; border-top: 0; }
.arr.down::after { border-top: 4px solid #46525e; border-bottom: 0; }
.thumb {
  height: 115px; margin-top: 1px; flex: none; border: 1px solid #b0b8c0; border-radius: 2px;
  background: linear-gradient(90deg, #dfe7ef, #eef2f6); display: flex; align-items: center; justify-content: center;
}
.thumb b { font: 7px/7px "Liberation Sans", sans-serif; color: #98a2ac; letter-spacing: -1px; }
.track { flex: 1; background: #f8fafc; }

.statusbar {
  height: 15px; flex: none; display: flex; justify-content: flex-start; padding-left: 539px; align-items: flex-start;
  background: linear-gradient(#d6d6d6, #c4c4c4);
}
.sap-logo { margin-top: -2px; }
.svg-sap { font: italic bold 10px "Liberation Sans", sans-serif; fill: #fff; }

.taskbar {
  height: 34px; flex: none; display: flex; align-items: stretch; padding-left: 0;
  background: linear-gradient(#afbdc7, #a5b3bd 70%, #94a2ad); border-top: 1px solid #8e9aa4;
}
.tb-item { width: 39.700px; flex: none; display: flex; align-items: center; justify-content: center; padding: 2px 0 2px; }
.tb-search { margin-left: -1px; }
.tb-div { width: 3px; height: 12px; margin: 12px 0 0 6px; flex: none; border-left: 1px solid #222; border-right: 1px solid #222; }
.tb-first { margin-left: 10px; }
.wx { margin-left: -6px; }
.tb-item.on { background: linear-gradient(#1c5c96, #1c5c96) center bottom / 33px 2px no-repeat; }
.tb-item.tb-hi { background: linear-gradient(#1c5c96, #1c5c96) center bottom / 33px 2px no-repeat, rgba(255,255,255,.22); }
.tb-item.tb-orange { background: linear-gradient(#d8631c, #d8631c) center bottom / 100% 2px no-repeat, #d99d6b; }
.svg-letter { font: bold 11px "Liberation Sans", sans-serif; fill: #fff; }
.tray { margin-left: 267px; display: flex; align-items: center; flex: none; color: #222; position: relative; padding-top: 3px; }
.tr-up { margin-left: 7px; }
.tr-black { width: 5px; height: 12px; margin-left: 12px; background: #000; }
.tr-wifi { margin-left: 15px; }
.tr-lang { margin-left: 3px; font: 12px/14px "Noto Sans CJK SC", sans-serif; color: #555; }
.tr-sogou { margin-left: 10px; }
.tr-clock { margin-left: 6px; width: 62px; display: flex; flex-direction: column; align-items: center; font: 10.500px/15px "Liberation Sans", sans-serif; color: #2a2e33; margin-top: 0; }
.tr-note { margin-left: 7px; margin-top: -6px; }

/* overlays on the video */
.hole-shadow { position: absolute; left: 198px; right: 201px; top: 0; height: 2px; background: #2b2b2d; filter: blur(.5px); }
.sap-win {
  position: absolute; left: 1022px; top: 0; width: 81px; height: 21px; padding: 3px 0 0 15px; display: flex; gap: 3px;
  background: #2c4478; clip-path: polygon(0 0, 100% 0, 88% 100%, 5% 100%, 0 50%); filter: blur(.3px);
}
.sap-win i { width: 12px; height: 12px; background: #3c5288; border-radius: 2px; display: block; }
.fab { position: absolute; top: 14px; width: 32px; height: 32px; border-radius: 8px; display: flex; align-items: center; justify-content: center; }
.fab-a { left: 960px; background: rgba(40,44,48,.85); }
.fab-b { left: 1016px; background: rgba(44,48,52,.82); }
.fab-c { left: 1072px; background: #1c2125; gap: 3px; }
.fab-c i { width: 4px; height: 4px; border-radius: 50%; background: #fff; display: block; }
.dot { position: absolute; right: -3px; top: -3px; width: 6px; height: 6px; border-radius: 50%; background: #f9404a; }
.svg-wen { font: bold 8px "Noto Sans CJK SC", sans-serif; fill: #fff; stroke: none; }
.cursor { position: absolute; left: 368px; top: 288px; }

.atrust { position: absolute; left: 1030px; top: 530px; width: 87px; height: 60px; background: #fff; border: 1px solid #e2e4e6; border-right: 0; }
.atrust-head { display: flex; align-items: center; gap: 6px; padding: 2px 0 0 9px; color: #8b949c; font-size: 12px; letter-spacing: .3px; }
.atrust-tr { position: absolute; left: 79px; top: 35px; font-size: 12px; line-height: 14px; color: #8b949c; }
.atrust-arrows { position: absolute; left: 24px; top: 51px; }
.ime { position: absolute; left: 941px; top: 559px; display: flex; align-items: center; }
.ime-bar { width: 145px; height: 19px; margin-left: -1px; background: rgba(238,241,244,.95); border: 1px solid #c8ccd0; display: flex; align-items: center; gap: 7px; padding-left: 4px; }
.ime-en { font: bold 12px/14px "Noto Sans CJK SC", sans-serif; color: #1f6fb5; }

.controls { position: absolute; left: 8px; right: 11px; top: 584px; height: 30px; display: flex; align-items: center; color: #fff; }
.pause { display: flex; gap: 4px; width: 29px; flex: none; margin-left: 1px; }
.pause i { width: 2px; height: 20px; background: #fff; display: block; }
.time { font: 16.400px/20px "Liberation Sans", sans-serif; color: #fff; flex: none; }
.t-cur { width: 52px; }
.progress { width: 777px; height: 3px; background: #e2e2e2; position: relative; flex: none; }
.progress-fill { width: 437px; height: 4px; margin-top: -.5px; background: #f9560f; }
.knob { position: absolute; width: 14px; height: 14px; border-radius: 50%; background: #fff; top: -5.500px; }
.progress .knob { left: 430px; }
.t-end { margin-left: 10px; width: 51px; }
.speed { width: 45px; height: 30px; border: 1px solid #fff; border-radius: 15px; text-align: center; font: 14px/28px "Noto Sans CJK SC", sans-serif; flex: none; color: #fff; }
.mute { margin-left: 6px; }
.volume { width: 109px; height: 3px; margin-left: 11px; background: #f9560f; position: relative; flex: none; }
.volume .knob { right: -7px; }

/* chat */
.chat { width: 234px; flex: none; position: relative; background: #1d2935; padding: 14px 19px 0 20px; }
.chat-title { font: 14px/20px "Noto Sans CJK SC", sans-serif; color: #c6ced6; }
.msgs { list-style: none; margin-top: 34px; display: flex; flex-direction: column; gap: 16px; }
.msgs li { font: 12px/20px "Noto Sans CJK SC", sans-serif; color: #e9edf1; }
.msgs em { color: #8a949e; }
.like { position: absolute; left: 196px; top: 584px; width: 30px; height: 30px; border-radius: 50%; background: #fff; display: flex; align-items: center; justify-content: center; }

/* bottom */
.bottom { flex: 1; display: flex; background: #1d2935; }
.info { width: 1128px; flex: none; padding: 12px 0 0 22px; color: #b8c1c9; font: 12px/18px "Noto Sans CJK SC", sans-serif; }
.info-host { display: flex; align-items: center; height: 28px; }
.avatar { width: 28px; height: 28px; margin: 0 6px 0 13px; border-radius: 50%; background: #2f96fb; color: #fff; font-size: 8px; line-height: 28px; text-align: center; }
.info-title { margin-top: 3px; color: #a8b2bb; word-spacing: 2.500px; }
.composer { flex: 1; border-top: 1px solid #2c3844; border-left: 1px solid #2c3844; position: relative; padding: 11px 0 0 11px; }
.placeholder { font: 12px/18px "Noto Sans CJK SC", sans-serif; color: #5e6a75; display: block; }
.send { position: absolute; left: 171px; top: 20px; width: 49px; height: 28px; border-radius: 14px; background: #2b3743; color: #8f9aa4; text-align: center; font: 14px/28px "Noto Sans CJK SC", sans-serif; }
```
